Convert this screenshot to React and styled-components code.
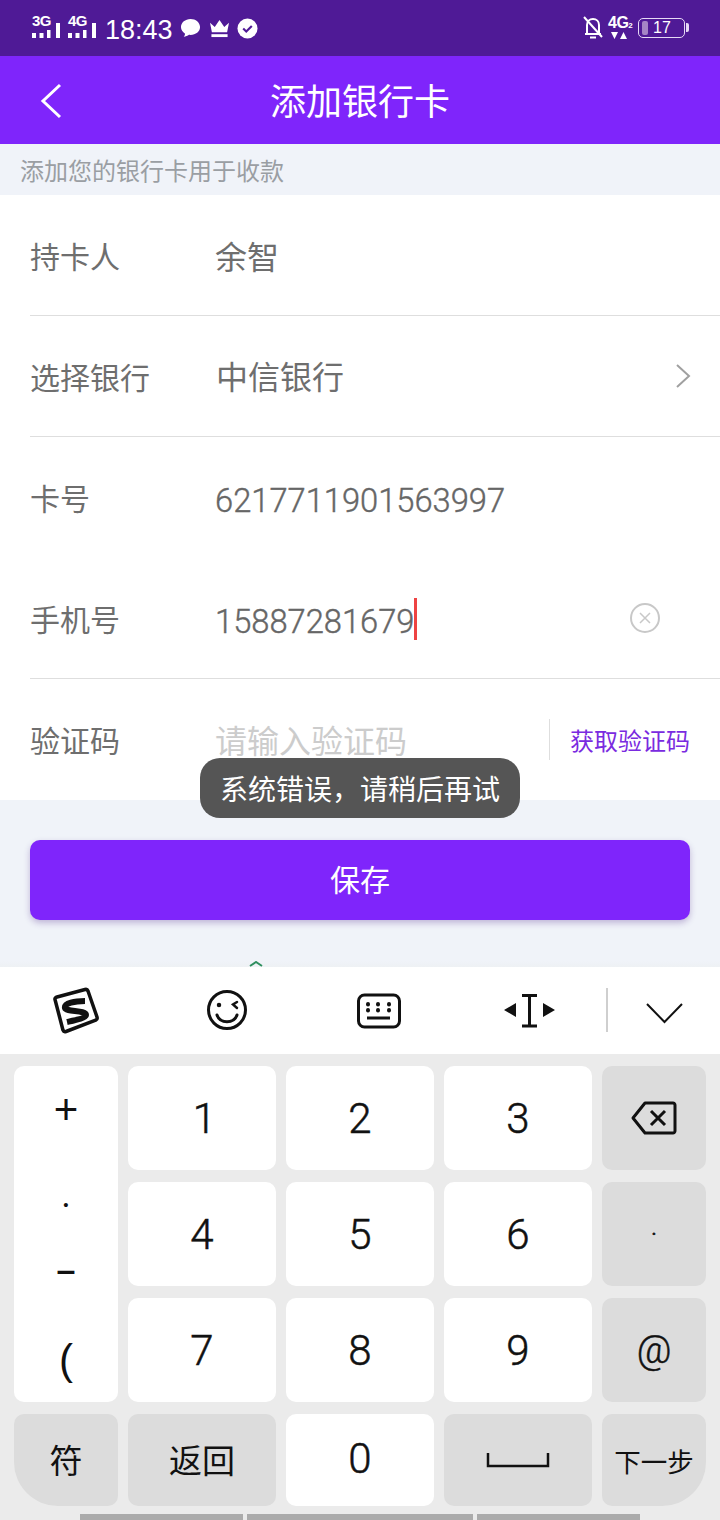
import React from "react"
import styled, { createGlobalStyle } from "styled-components"

const GlobalStyle = createGlobalStyle`
  html, body { margin: 0; padding: 0; background: #fff; }
  * { box-sizing: border-box; }
`;

const CJK = `"Noto Sans CJK SC", "Noto Sans", sans-serif`;
const NUM = `Roboto, "Noto Sans CJK SC", sans-serif`;
const LIB = `"Liberation Sans", "Noto Sans CJK SC", sans-serif`;

const Screen = styled.div`
  position: relative;
  width: 720px;
  height: 1520px;
  overflow: hidden;
  display: flex;
  flex-direction: column;
  font-family: ${CJK};
  background: #f0f3f9;
`;

/* status bar */
const StatusBar = styled.div`
  height: 56px;
  background: #4f1a96;
  display: flex;
  align-items: center;
  justify-content: space-between;
  padding: 0 35px 0 32px;
  color: #fff;
`;

const StatusGroup = styled.div`
  display: flex;
  align-items: center;
  gap: ${p => p.$gap || 8}px;
`;

const SignalBox = styled.div`
  width: 28px;
  height: 26px;
  margin-top: -2px;
  position: relative;
`;

const SignalLabel = styled.span`
  font: bold 15px/12px "Liberation Sans", sans-serif;
  letter-spacing: -0.5px;
  position: absolute;
  left: 0;
  top: 1px;
`;

const Clock = styled.span`
  font: 27px/30px "Liberation Sans", sans-serif;
  margin: 3px 0 0 1px;
  width: 67px;
`;

const NetBox = styled.div`
  position: relative;
  width: 25px;
  height: 24px;
`;

const NetLabel = styled.span`
  position: absolute;
  top: -1px;
  left: 0;
  font: bold 16px/16px "Liberation Sans", sans-serif;
  letter-spacing: -0.5px;
  sub { font-size: 8px; vertical-align: baseline; letter-spacing: 0; }
`;

const Battery = styled.div`
  position: relative;
  width: 47px;
  height: 20px;
  border: 1.5px solid #e6d9f5;
  border-radius: 5px;
  display: flex;
  align-items: center;
  padding-left: 3px;
  &::after {
    content: "";
    position: absolute;
    right: -4.500px;
    top: 4px;
    width: 3px;
    height: 9px;
    border-radius: 0 2px 2px 0;
    background: #e6d9f5;
  }
`;

const BatteryFill = styled.div`
  width: 6px;
  height: 14px;
  border-radius: 2px;
  background: #a585c6;
`;

const BatteryText = styled.span`
  font: 16px/18px "Liberation Sans", sans-serif;
  margin-left: 5px;
`;

/* header */
const Header = styled.div`
  position: relative;
  height: 88px;
  background: #7f25fb;
  display: flex;
  align-items: center;
  justify-content: center;
  color: #fff;
`;

const BackButton = styled.div`
  position: absolute;
  left: 40px;
  top: 27px;
  line-height: 0;
`;

const Title = styled.h1`
  margin: -2px 0 0;
  font-size: 36px;
  font-weight: 400;
  line-height: 48px;
`;

const Hint = styled.div`
  height: 51px;
  padding: 9px 0 0 20px;
  font-size: 24px;
  line-height: 34px;
  color: #9a9ea3;
  background: #f0f3f9;
`;

/* form */
const Form = styled.div`
  background: #fff;
`;

const Row = styled.div`
  height: 121px;
  margin-left: 30px;
  padding-right: 30px;
  display: flex;
  align-items: center;
  border-bottom: 1px solid ${p => (p.$line ? "#dedede" : "transparent")};
`;

const Label = styled.div`
  width: 185px;
  font-size: 30px;
  color: #6e6e6e;
  flex-shrink: 0;
`;

const Value = styled.div`
  font-family: ${CJK};
  font-size: 32px;
  color: ${p => (p.$placeholder ? "#cccccc" : "#6e6e6e")};
  margin: ${p => p.$top || 0}px 0 0 ${p => p.$shift || 0}px;
  line-height: 44px;
`;

const NumberValue = styled.div`
  font-family: ${NUM};
  font-size: 32.7px;
  font-weight: 300;
  -webkit-text-stroke: 0.4px #666;
  color: #666;
  margin-top: 8px;
  line-height: 44px;
`;

const Caret = styled.div`
  width: 3px;
  height: 42px;
  background: #ee4343;
  margin-top: 2px;
`;

const RowEnd = styled.div`
  margin-left: auto;
  margin-right: ${p => p.$right || 0}px;
  display: flex;
  align-items: center;
  line-height: 0;
`;

const CodeButton = styled.div`
  height: 41px;
  padding-left: 20px;
  border-left: 1px solid #dedede;
  font-size: 24px;
  line-height: 41px;
  color: #7a2be0;
`;

const Actions = styled.div`
  position: relative;
  height: 167px;
  padding: 40px 30px 0;
  background: linear-gradient(#f0f3f9 96%, #eef1f4);
`;

const SaveButton = styled.button`
  display: block;
  width: 100%;
  height: 80px;
  padding: 0 0 5px;
  border: none;
  border-radius: 10px;
  background: #7f25fb;
  color: #fff;
  font-family: ${CJK};
  font-size: 30px;
  box-shadow: 0 3px 6px rgba(80, 40, 140, 0.3);
`;

const Peek = styled.div`
  position: absolute;
  left: 248px;
  bottom: 0;
  line-height: 0;
`;

const Toast = styled.div`
  position: absolute;
  left: 200px;
  top: 758px;
  width: 320px;
  height: 60px;
  border-radius: 20px;
  background: #555;
  color: #fff;
  font-size: 28px;
  line-height: 60px;
  text-align: center;
`;

/* keyboard */
const Toolbar = styled.div`
  height: 87px;
  background: #fff;
  position: relative;
`;

const ToolSlot = styled.div`
  position: absolute;
  left: ${p => p.$x}px;
  top: ${p => p.$y}px;
  line-height: 0;
`;

const ToolDivider = styled.div`
  position: absolute;
  left: 606px;
  top: 21px;
  width: 2px;
  height: 44px;
  background: #cfcfcf;
`;

const Keys = styled.div`
  flex: 1;
  background: #ebebeb;
  display: grid;
  grid-template-columns: 104px 148px 148px 148px 104px;
  grid-template-rows: 104px 104px 104px 92px;
  gap: 12px 10px;
  padding: 12px 14px 0;
`;

const Key = styled.div`
  display: flex;
  align-items: center;
  justify-content: center;
  border-radius: ${p => p.$radius || "10px"};
  background: ${p => (p.$gray ? "#dcdcdc" : "#fff")};
  color: #111;
  font-family: ${NUM};
  font-weight: 300;
  -webkit-text-stroke: 0.5px #111;
  font-size: ${p => p.$size || 42}px;
  padding: 0 0 ${p => p.$lift || 0}px ${p => p.$nudge || 0}px;
`;

const CjkKey = styled(Key)`
  font-family: ${CJK};
  font-weight: 400;
  -webkit-text-stroke: 0;
`;

const SymbolKey = styled.div`
  grid-row: 1 / span 3;
  border-radius: 10px;
  background: #fff;
  display: flex;
  flex-direction: column;
  align-items: center;
  color: #111;
  font-family: ${LIB};
`;

const SymbolText = styled.span`
  height: 44px;
  line-height: 44px;
  font-size: ${p => p.$size || 42}px;
  font-weight: ${p => (p.$bold ? 700 : 400)};
  margin-top: ${p => p.$top}px;
`;

const NavBar = styled.div`
  position: absolute;
  left: 80px;
  bottom: 0;
  width: 560px;
  height: 6px;
  display: flex;
  gap: 4px;
`;

const NavPiece = styled.div`
  flex: ${p => p.$w} 0 0;
  background: #ababab;
`;

const SignalIcon = ({ label }) => (
  <SignalBox>
    <SignalLabel>{label}</SignalLabel>
    <svg width="28" height="16" viewBox="0 0 28 16" fill="#fff" style={{ position: "absolute", left: 0, top: 8 }}>
      <rect x="0" y="11" width="4" height="5" />
      <rect x="7.500" y="11" width="4" height="5" />
      <rect x="15" y="8" width="3.500" height="8" />
      <rect x="24" y="1" width="4" height="15" />
    </svg>
  </SignalBox>
);

const App = () => {
  return (
    <Screen>
      <GlobalStyle />
      <StatusBar>
        <StatusGroup>
          <SignalIcon label="3G" />
          <SignalIcon label="4G" />
          <Clock>18:43</Clock>
          <StatusGroup $gap={7.5}>
            <svg width="21" height="20" viewBox="0 0 22 21" fill="#fff">
              <path d="M11 1C5.500 1 1 4.800 1 9.500c0 2.900 1.700 5.400 4.300 7-.1 1.200-.7 2.400-1.500 3.300 2.200-.2 4.200-1 5.600-2.100.5.100 1.100.1 1.600.1 5.500 0 10-3.500 10-8.300S16.500 1 11 1z" />
            </svg>
            <svg width="21" height="19" viewBox="0 0 22 20" fill="#fff">
              <path d="M1 4l5 4.500L11 1l5 7.500L21 4l-2 10H3z" />
              <rect x="2.500" y="16" width="17" height="3" />
            </svg>
            <svg width="21" height="21" viewBox="0 0 22 22">
              <circle cx="11" cy="11" r="10.500" fill="#fff" />
              <path d="M6.500 11l3.200 3.200 5.800-5.800" fill="none" stroke="#4f1a96" strokeWidth="2.200" />
            </svg>
          </StatusGroup>
        </StatusGroup>
        <StatusGroup $gap={5}>
          <svg width="20" height="24" viewBox="0 0 20 24" fill="none" stroke="#fff" strokeWidth="2">
            <path d="M4 17V9c0-3.500 2.500-6 6-6s6 2.500 6 6v8" />
            <path d="M2 18h16M7 21.500h6" />
            <path d="M1 1l18 20" />
          </svg>
          <NetBox>
            <NetLabel>4G<sub>2</sub></NetLabel>
            <svg width="16" height="7" viewBox="0 0 16 7" fill="#fff" style={{ position: "absolute", left: 3, top: 16 }}>
              <path d="M0 0h7L3.500 7zM9 7h7L12.500 0z" />
            </svg>
          </NetBox>
          <Battery>
            <BatteryFill />
            <BatteryText>17</BatteryText>
          </Battery>
        </StatusGroup>
      </StatusBar>

      <Header>
        <BackButton>
          <svg width="22" height="36" viewBox="0 0 22 36" fill="none" stroke="#fff" strokeWidth="3">
            <path d="M20 2L3 18l17 16" />
          </svg>
        </BackButton>
        <Title>添加银行卡</Title>
      </Header>
      <Hint>添加您的银行卡用于收款</Hint>

      <Form>
        <Row $line>
          <Label>持卡人</Label>
          <Value>余智</Value>
        </Row>
        <Row $line>
          <Label>选择银行</Label>
          <Value $shift={1} $top={-2}>中信银行</Value>
          <RowEnd $right={-1}>
            <svg width="16" height="24" viewBox="0 0 16 24" fill="none" stroke="#a0a0a0" strokeWidth="2">
              <path d="M2 1l12 11L2 23" />
            </svg>
          </RowEnd>
        </Row>
        <Row>
          <Label>卡号</Label>
          <NumberValue>6217711901563997</NumberValue>
        </Row>
        <Row $line>
          <Label>手机号</Label>
          <NumberValue>15887281679</NumberValue>
          <Caret />
          <RowEnd $right={30}>
            <svg width="30" height="30" viewBox="0 0 30 30" fill="none" stroke="#c8c8c8">
              <circle cx="15" cy="15" r="14" strokeWidth="2" />
              <path d="M10 10l10 10M20 10L10 20" strokeWidth="1.500" />
            </svg>
          </RowEnd>
        </Row>
        <Row>
          <Label>验证码</Label>
          <Value $placeholder>请输入验证码</Value>
          <RowEnd>
            <CodeButton>获取验证码</CodeButton>
          </RowEnd>
        </Row>
      </Form>

      <Actions>
        <SaveButton>保存</SaveButton>
        <Peek>
          <svg width="16" height="6" viewBox="0 0 16 6" fill="none" stroke="#2f8f5f" strokeWidth="2">
            <path d="M2 5l6-4 6 4" />
          </svg>
        </Peek>
      </Actions>

      <Toast>系统错误，请稍后再试</Toast>

      <Toolbar>
        <ToolSlot $x={50} $y={18}>
          <svg width="50" height="50" viewBox="0 0 50 50">
            <path d="M7 12L35 4.500c1.500-.4 2.500.2 3 1.500L47 32c.5 1.500 0 2.500-1.300 3.200L16 46.500c-1.500.5-2.500 0-3-1.300L5 14.500c-.4-1.200 .8-2.200 2-2.500z" fill="#fff" stroke="#111" strokeWidth="3.500" strokeLinejoin="round" />
            <path d="M35 16C25 16 14 18 15 23c1 4 21 2 21 7 0 3-10 5-19 7" fill="none" stroke="#111" strokeWidth="6" />
          </svg>
        </ToolSlot>
        <ToolSlot $x={206} $y={22}>
          <svg width="42" height="42" viewBox="0 0 42 42" fill="none" stroke="#111" strokeWidth="3" strokeLinecap="round">
            <circle cx="21" cy="21" r="18.500" />
            <circle cx="13" cy="16" r="1.500" fill="#111" strokeWidth="1.500" />
            <path d="M31 13l-4 2.500 4 3.500" strokeWidth="2.500" />
            <path d="M11 26c3 9 17 9 20 0" />
          </svg>
        </ToolSlot>
        <ToolSlot $x={356} $y={26}>
          <svg width="46" height="36" viewBox="0 0 46 36" fill="none" stroke="#111" strokeWidth="3">
            <rect x="2.500" y="2" width="41" height="32" rx="6" />
            <path d="M11 25h23" />
            <path d="M12 11v.5M22 11v.5M33 11v.5M12 17v.5M22 17v.5M33 17v.5" strokeWidth="4" strokeLinecap="round" />
          </svg>
        </ToolSlot>
        <ToolSlot $x={503} $y={25}>
          <svg width="54" height="38" viewBox="0 0 54 38" fill="#111">
            <path d="M1 18l12-7v14zM52 18l-12-7v14z" />
            <path d="M19 3.500h15M19 34h15M26.500 3.500V34" stroke="#111" strokeWidth="3" fill="none" />
          </svg>
        </ToolSlot>
        <ToolDivider />
        <ToolSlot $x={646} $y={35}>
          <svg width="37" height="22" viewBox="0 0 37 22" fill="none" stroke="#111" strokeWidth="2">
            <path d="M1 2l17.500 18L36 2" />
          </svg>
        </ToolSlot>
      </Toolbar>

      <Keys>
        <SymbolKey>
          <SymbolText $top={22}>+</SymbolText>
          <SymbolText $top={51} $size={15}>•</SymbolText>
          <SymbolText $top={20} $size={34} $bold>–</SymbolText>
          <SymbolText $top={47}>(</SymbolText>
        </SymbolKey>
        <Key $nudge={5}>1</Key>
        <Key>2</Key>
        <Key>3</Key>
        <Key $gray>
          <svg width="46" height="34" viewBox="0 0 46 34" fill="none" stroke="#111" strokeWidth="3" strokeLinejoin="round">
            <path d="M14 2h28c1 0 2 1 2 2v26c0 1-1 2-2 2H14L2 17z" />
            <path d="M20 10l14 14M34 10L20 24" />
          </svg>
        </Key>
        <Key>4</Key>
        <Key>5</Key>
        <Key>6</Key>
        <Key $gray $size={28}>·</Key>
        <Key>7</Key>
        <Key>8</Key>
        <Key>9</Key>
        <Key $gray $size={38}>@</Key>
        <CjkKey $gray $radius="10px 10px 10px 44px" $size={33} $lift={3}>符</CjkKey>
        <CjkKey $gray $size={33} $lift={3}>返回</CjkKey>
        <Key $lift={4}>0</Key>
        <Key $gray>
          <svg width="64" height="16" viewBox="0 0 64 16" fill="none" stroke="#111" strokeWidth="2.500">
            <path d="M2 1v13h60V1" />
          </svg>
        </Key>
        <CjkKey $gray $radius="10px 10px 44px 10px" $size={26.5}>下一步</CjkKey>
      </Keys>

      <NavBar>
        <NavPiece $w={163} />
        <NavPiece $w={226} />
        <NavPiece $w={163} />
      </NavBar>
    </Screen>
  );
};

export default App;
